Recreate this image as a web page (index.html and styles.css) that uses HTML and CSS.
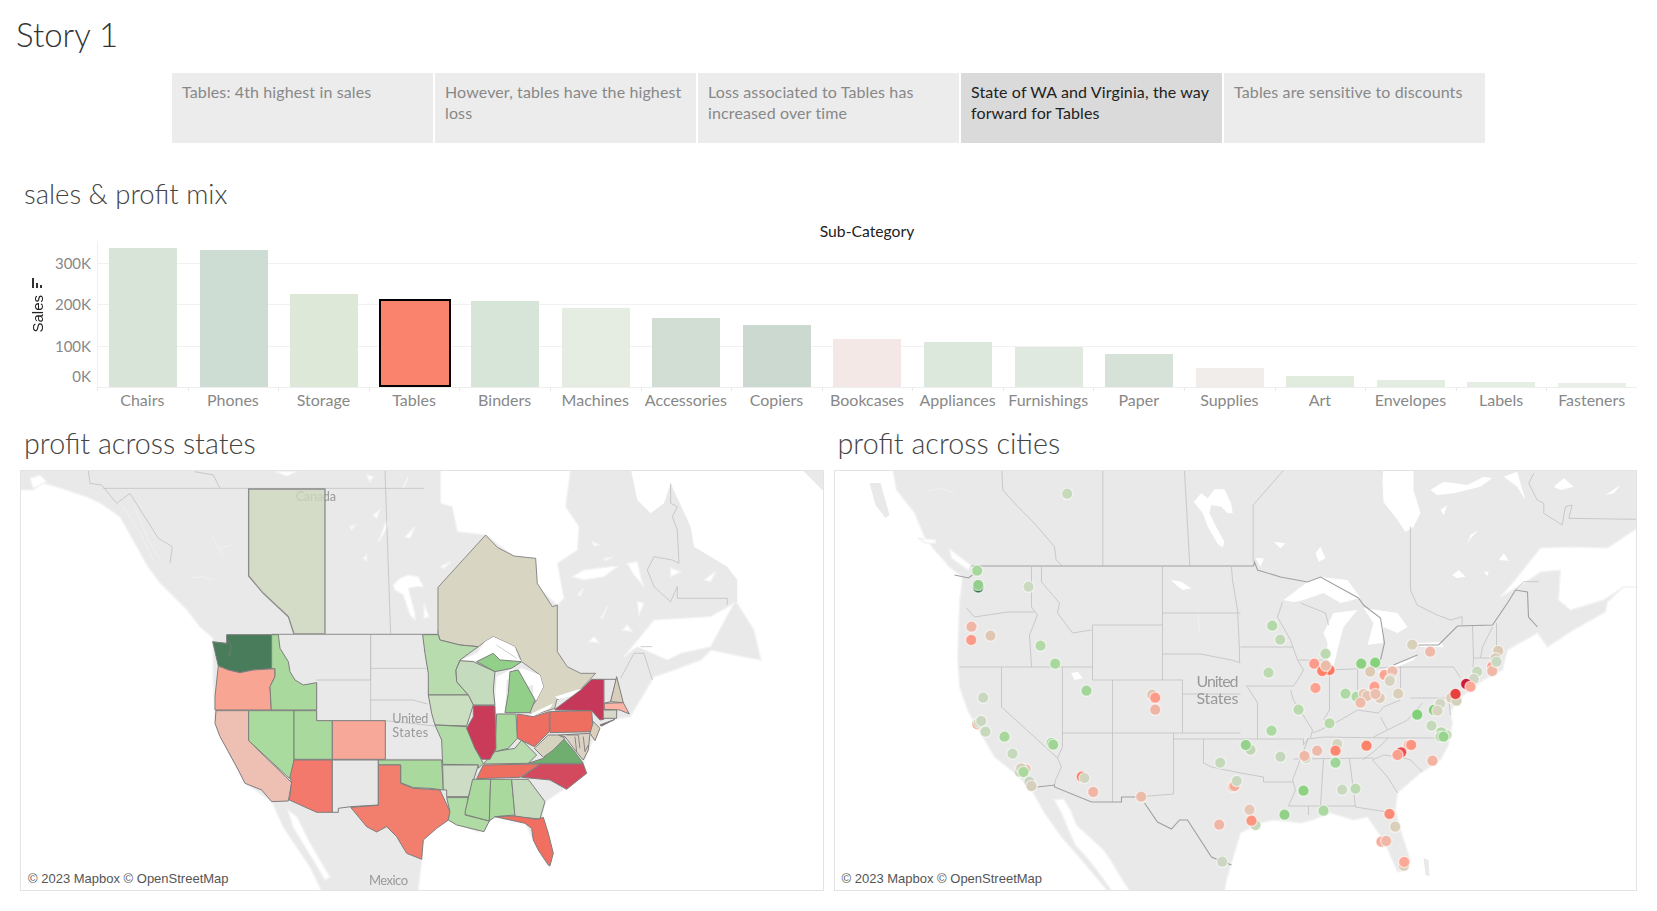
FILE: index.html
```html
<!DOCTYPE html>
<html lang="en">
<head>
<meta charset="utf-8">
<title>Story 1</title>
<link rel="stylesheet" href="styles.css">
</head>
<body>
<main class="story">
  <h1 class="story-title">Story 1</h1>
  <nav class="tabs">
    <div class="tab">Tables: 4th highest in sales</div>
    <div class="tab">However, tables have the highest loss</div>
    <div class="tab">Loss associated to Tables has increased over time</div>
    <div class="tab tab-active">State of WA and Virginia, the way forward for Tables</div>
    <div class="tab">Tables are sensitive to discounts</div>
  </nav>

  <section class="mix">
    <h2 class="sheet-title">sales &amp; profit mix</h2>
    <div class="col-header">Sub-Category</div>
    <div class="chart">
      <div class="yaxis">
        <div class="ytitle">
          <svg class="sort-icon" width="11" height="10" viewBox="0 0 11 10"><rect x="0" y="0" width="2" height="10"/><rect x="4" y="5" width="2" height="5"/><rect x="8" y="7" width="2" height="3"/></svg>
          <span class="ytitle-text">Sales</span>
        </div>
        <div class="yticks"><span>300K</span><span>200K</span><span>100K</span><span>0K</span></div>
      </div>
      <div class="plot">
        <div class="bar" style="height:139px;background:#d8e4d8"></div>
        <div class="bar" style="height:137px;background:#cdddd3"></div>
        <div class="bar" style="height:93px;background:#dde8d9"></div>
        <div class="bar bar-selected" style="height:88px;background:#f9836c"></div>
        <div class="bar" style="height:86px;background:#d7e4d8"></div>
        <div class="bar" style="height:79px;background:#e5ede3"></div>
        <div class="bar" style="height:69px;background:#d2ded4"></div>
        <div class="bar" style="height:62px;background:#ccd9d0"></div>
        <div class="bar" style="height:48px;background:#f3e8e6"></div>
        <div class="bar" style="height:45px;background:#dde8dc"></div>
        <div class="bar" style="height:40px;background:#e0e9df"></div>
        <div class="bar" style="height:33px;background:#d6e2d7"></div>
        <div class="bar" style="height:19px;background:#f0edea"></div>
        <div class="bar" style="height:11px;background:#e1ecdf"></div>
        <div class="bar" style="height:7px;background:#e4ede2"></div>
        <div class="bar" style="height:5px;background:#e4eee2"></div>
        <div class="bar" style="height:4px;background:#e9eee6"></div>
      </div>
      <div class="xlabels">
        <span>Chairs</span><span>Phones</span><span>Storage</span><span>Tables</span><span>Binders</span><span>Machines</span><span>Accessories</span><span>Copiers</span><span>Bookcases</span><span>Appliances</span><span>Furnishings</span><span>Paper</span><span>Supplies</span><span>Art</span><span>Envelopes</span><span>Labels</span><span>Fasteners</span>
      </div>
    </div>
  </section>

  <section class="maps">
    <div class="map-col">
      <h2 class="sheet-title">profit across states</h2>
      <div class="map-card">
        <svg class="map" viewBox="21 471 802 419">
          <rect class="land" x="0" y="400" width="900" height="500"/>
          <polygon class="water" points="18,490 33,490 43,483 57,487 87,497 100,503 120,517 133,540 148,567 160,583 187,610 200,627 213,638 213,680 215,720 228,752 245,783 272,802 283,827 310,867 322,892 18,892"/>
          <polygon class="water" points="288,810 297,817 310,843 330,877 325,880 307,850 293,827"/>
          <polygon class="water" points="418,892 422,859 423,840 437,828 450,820 478,832 489,821 495,817 525,823 533,840 542,857 549,866 553,853 542,817 545,802 563,790 587,773 583,763 593,740 600,727 615,719 630,717 654,677 674,670 701,660 711,650 744,657 761,660 754,630 737,603 826,595 826,892"/>
          <g transform="translate(20,470) scale(.3333)">
            <g class="water">
              <polygon points="765,5 830,5 800,18"/><polygon points="990,170 1005,165 995,180"/><polygon points="1075,215 1100,150 1105,165 1080,210"/><polygon points="1030,265 1040,255 1040,272"/><polygon points="1120,345 1140,325 1165,315 1195,320 1210,350 1190,350 1165,355 1185,430 1185,450 1170,435 1150,375 1125,360"/><polygon points="1040,15 1060,20 1050,35"/><polygon points="1150,50 1165,20 1150,55"/><polygon points="1155,200 1185,170 1170,205"/><polygon points="1060,135 1080,120 1070,145"/><polygon points="30,25 60,15 80,35 40,55"/>
            </g>
            <g class="river">
              <polyline points="575,195 610,260"/><polyline points="595,235 635,225"/><polyline points="510,325 545,320 578,330"/><polyline points="310,110 360,190 400,270"/><polyline points="340,100 385,210 420,270"/>
            </g>
            <g class="border-thin">
              <polyline points="205,0 210,40 245,45 290,100 330,70 415,205 457,230 450,280"/><polyline points="525,5 580,15 600,55"/><polyline points="250,55 1212,55"/><polyline points="1095,0 1112,492"/><polyline points="1052,492 1052,630"/>
            </g>
            <text class="map-label" x="827" y="92" textLength="121">Canada</text>
            <polygon class="state" fill="#ced8bf" fill-opacity=".8" points="686,57 915,57 915,492 822,492 805,440 730,370 686,318"/>
          </g>
          <g transform="translate(424,470) scale(.3333)">
            <polygon class="water-lake" points="620,-5 1130,-5 1195,60 1210,60 1210,410 940,400 940,330 910,290 810,230 800,170 740,40 720,100 680,130 640,90"/>
            <g class="water">
              <polygon points="50,-5 440,-5 425,110 465,170 460,240 400,280 420,385 400,405 340,350 335,265 270,260 185,195 100,185 85,110 50,100"/>
              <polygon points="600,560 690,450 860,440 930,400 860,530 770,550 730,570 640,530"/>
              <polygon points="445,320 480,300 560,290 580,290 540,320 480,330"/><polygon points="505,215 525,225 510,228"/><polygon points="540,265 565,262 545,272"/><polygon points="610,280 640,275 650,320 660,350 630,315"/><polygon points="740,295 770,305 740,320"/><polygon points="840,330 875,305 860,335"/><polygon points="530,445 550,410 535,445"/><polygon points="640,395 660,400 645,435"/><polygon points="495,515 510,500 525,518"/><polygon points="595,480 610,465 625,485"/><polygon points="462,375 478,355 470,378"/><polygon points="50,290 80,275 60,295"/><polygon points="0,400 15,440 0,445"/>
            </g>
            <g class="border-thin">
              <polyline points="740,40 740,100 760,110 745,140 760,180 765,280 745,270 690,260 670,300 690,350 740,395 760,350 760,385 910,385 910,405"/>
              <polyline points="590,625 630,550 660,550 685,630"/><polyline points="650,530 685,530"/>
            </g>
          </g>
          <text class="map-label" x="369" y="885" textLength="39">Mexico</text>
          <g transform="translate(200,620) scale(.3333)">
            <polygon class="state state-soft" fill="#d8d5c3" points="714,40 714,-98 857,-255 892,-218 942,-192 1007,-185 1012,-110 1057,-40 1072,-45 1072,95 1102,140 1142,160 1187,160 1145,205 1070,240 1065,265 1000,285 985,275 1010,240 1030,200 1020,165 965,125 955,100 945,80 880,50 855,65 835,80 780,75 720,60"/>
            <g class="water-lake">
              <polygon points="785,120 830,100 855,65 880,50 945,80 955,115 968,125 890,125 880,100 830,122"/>
              <polygon points="885,282 885,240 890,170 940,145 945,165 920,180 915,280"/>
              <polygon points="965,145 1020,165 1030,200 1010,240 1000,235 1000,195 975,200 950,150"/>
              <polygon points="985,285 1060,250 1050,265 1000,288"/>
              <polygon points="1065,230 1145,205 1130,225 1075,238"/>
            </g>
            <g class="border-thin">
              <polyline points="890,75 950,115"/>
              <polyline points="512,44 512,300"/><polyline points="350,180 512,180"/><polyline points="512,145 680,145"/><polyline points="512,240 640,240 682,252"/><polyline points="350,188 350,302 556,302 705,318"/><polyline points="556,302 556,418"/><polyline points="556,418 725,418"/>
            </g>
            <polyline class="border-us" points="215,43 715,43 715,30"/>
            <text class="map-label" x="577" y="308" textLength="108">United</text>
            <text class="map-label" x="577" y="352" textLength="108">States</text>
            <g class="states">
              <polygon fill="#497c5a" points="80,44 215,44 215,146 160,150 120,158 85,150 55,138 45,95 38,65 80,70"/>
              <polygon fill="#f9a593" points="55,138 85,150 120,158 160,150 225,146 225,170 210,200 214,270 45,270 45,230"/>
              <polygon fill="#a9d99d" points="215,44 235,44 240,85 265,125 270,155 285,180 310,195 350,188 350,270 214,270 210,200 225,170 225,146 215,146"/>
              <polygon fill="#eebfb3" points="48,272 146,272 146,362 275,488 265,543 215,545 185,510 135,490 115,450 85,395 60,350 45,310"/>
              <polygon fill="#aadb9e" points="146,272 282,272 282,450 268,475 146,362"/>
              <polygon fill="#a9d99d" points="282,272 350,272 350,302 397,302 397,418 282,418"/>
              <polygon fill="#f8a899" points="397,302 556,302 556,418 397,418"/>
              <polygon fill="#f2796b" points="282,420 397,420 397,577 350,577 268,540 275,488 270,470"/>
              <polygon fill="#e8e8e8" points="397,420 535,420 535,555 452,560 415,565 415,577 397,577"/>
              <polygon fill="#a9d99d" points="535,420 725,420 730,510 690,505 640,503 602,488 602,435 535,435"/>
              <polygon fill="#f27f6d" points="535,435 602,435 602,490 640,505 720,510 750,575 745,600 710,625 670,660 665,718 620,700 590,650 560,620 530,636 500,620 452,562 535,556"/>
              <polygon fill="#b9dcae" points="668,44 715,44 720,60 780,75 835,80 780,120 768,150 770,185 805,225 685,225 685,160 675,100"/>
              <polygon fill="#c5dbbd" points="780,122 820,125 885,155 880,210 885,255 820,255 805,225 770,185 768,150"/>
              <polygon fill="#cadec0" points="685,225 805,225 820,255 800,318 705,315 695,280"/>
              <polygon fill="#b0dba6" points="705,315 800,320 825,385 850,430 835,445 835,435 728,433 725,360"/>
              <polygon fill="#cddcc5" points="728,435 835,435 805,530 740,530 740,510 730,510"/>
              <polygon fill="#b0dba5" points="740,533 805,533 795,585 868,603 852,635 770,615 745,600 750,575"/>
              <polygon fill="#a9d99d" points="818,478 872,478 868,603 800,585 795,578"/>
              <polygon fill="#a9d99d" points="872,478 935,478 945,585 885,590 868,603"/>
              <polygon fill="#c7dcbe" points="935,478 985,478 1035,545 1020,597 945,590"/>
              <polygon fill="#f06f60" points="885,590 945,588 1012,598 1030,592 1045,640 1060,700 1050,738 1045,735 1015,690 1000,660 995,625 975,610 930,600"/>
              <polygon fill="#b9dcae" points="850,432 885,395 945,385 965,360 1010,405 985,430"/>
              <polygon fill="#ee6e60" points="850,435 1022,432 960,472 830,476"/>
              <polygon fill="#d34a5e" points="1022,432 1150,432 1160,460 1100,508 1050,480 965,472"/>
              <polygon fill="#dcd3c5" points="1075,345 1170,340 1165,390 1150,420 1125,390 1095,350"/>
              <polygon fill="#6fae6e" points="985,430 1030,415 1090,355 1120,390 1150,430"/>
              <polygon fill="#d6d2c0" points="1003,385 1045,345 1075,345 1095,355 1060,390 1030,412"/>
              <polygon fill="#ef6e62" points="952,282 1000,290 1048,275 1048,335 1003,380 952,355"/>
              <polygon fill="#a9d99d" points="890,282 948,282 952,355 925,385 885,395"/>
              <polygon fill="#c93b58" points="820,257 885,257 888,385 870,418 845,418 825,385 800,325 820,290"/>
              <polygon fill="#92cf89" points="930,155 955,150 1005,240 990,278 915,278 925,220"/>
              <polygon fill="#92cf89" points="830,125 880,100 900,120 965,125 935,145 885,155"/>
              <polygon fill="#ee6e60" points="1050,275 1175,272 1180,335 1050,338"/>
              <polygon fill="#c6385a" points="1065,268 1145,208 1175,178 1212,178 1212,298 1200,300 1175,272 1065,270"/>
              <polygon fill="#c6385a" points="1200,315 1245,298 1205,318"/>
              <polygon fill="#e8e8e8" points="1212,178 1250,178 1232,245 1212,250"/>
              <polygon fill="#d9cdbb" points="1232,245 1250,170 1270,248"/>
              <polygon fill="#fdb3a6" points="1213,250 1270,248 1288,282 1260,270 1213,268"/>
              <polygon fill="#d4d9c8" points="1210,270 1250,270 1250,295 1210,295"/>
              <polygon fill="#dccfbc" points="1180,305 1200,325 1185,362 1170,340"/>
            </g>
            <g class="state-detail">
              <polyline points="85,60 95,85 85,110 92,100"/>
              <polyline points="1100,345 1135,345 1140,385"/><polyline points="1150,350 1155,395 1165,375"/><polyline points="1125,350 1130,395"/>
            </g>
          </g>
        </svg>
        <div class="attribution">© 2023 Mapbox © OpenStreetMap</div>
      </div>
    </div>

    <div class="map-col">
      <h2 class="sheet-title">profit across cities</h2>
      <div class="map-card">
        <svg class="map" viewBox="834.5 471 801.5 419">
          <rect class="land" x="800" y="400" width="900" height="500"/>
          <polygon class="water" points="832,468 892,468 896,490 914,513 924,537 934,550 949,567 958,574 962,577 959,603 957,657 959,687 967,710 974,723 994,757 1014,773 1031,790 1044,813 1061,837 1081,860 1108,892 832,892"/>
          <polygon class="land" points="869,483 880,483 889,515 885,518 875,505"/>
          <polygon class="water" points="917,538 935,540 935,543 925,543"/><polygon class="water" points="949,549 970,565 968,570 951,558"/>
          <polygon class="water" points="1054,800 1063,799 1070,810 1076,825 1090,838 1103,850 1110,860 1122,880 1130,892 1112,892 1100,875 1090,862 1075,845 1068,830 1062,815"/>
          <polygon class="water" points="1224,892 1226,880 1231,863 1240,833 1260,823 1273,820 1300,823 1312,820 1330,813 1353,820 1367,817 1383,840 1397,872 1407,870 1410,860 1400,830 1395,810 1397,793 1420,773 1440,760 1448,745 1452,723 1450,712 1457,700 1483,680 1502,670 1507,650 1537,633 1547,647 1573,630 1605,612 1607,602 1623,587 1642,587 1642,892"/>
          <polygon class="land" points="1423,858 1428,860 1429,876 1425,875"/>
          <polygon class="water" points="1500,597 1517,577 1540,548 1573,547 1607,548 1637,528 1642,526 1642,587 1623,587 1603,600 1570,610 1558,600 1560,570 1540,572 1525,582"/>
          <polygon class="water-lake" points="1383,468 1413,468 1413,490 1420,513 1413,527 1405,532 1397,520 1383,502 1382,480"/>
          <g class="water-lake">
            <polygon points="1283,600 1307,582 1320,577 1347,580 1360,598 1340,603 1323,593 1303,600 1293,602"/>
            <polygon points="1323,633 1333,613 1357,610 1343,627 1337,650 1333,667 1326,660 1327,643"/>
            <polygon points="1363,608 1397,613 1407,627 1397,633 1383,627 1382,643 1367,645 1373,623"/>
            <polygon points="1377,672 1397,663 1417,655 1413,660 1397,667 1382,675"/>
            <polygon points="1417,643 1440,642 1443,647 1420,647"/>
          </g>
          <g transform="translate(834,470) scale(.3333)">
            <g class="water-lake">
              <polygon points="1078,95 1100,70 1120,85 1140,58 1170,58 1190,100 1195,130 1180,130 1160,110 1130,105 1125,130 1145,170 1170,215 1165,232 1150,222 1120,170 1105,130"/>
              <polygon points="1010,330 1040,335 1070,355 1045,360 1025,345"/>
              <polygon points="710,610 730,605 745,625 720,630"/>
            </g>
            <g class="river"><polyline points="275,65 320,55 360,70"/><polyline points="1090,420 1095,490"/></g>
            <g class="border-thin">
              <polyline points="502,0 505,60 550,110 600,160 660,230 665,270 683,288"/><polyline points="805,0 805,288"/><polyline points="1050,0 1066,288"/>
            </g>
          </g>
          <g transform="translate(1240,470) scale(.3333)">
            <g class="water-lake">
              <polygon points="570,60 610,35 680,45 730,20 755,25 720,50 640,70 590,75"/><polygon points="790,20 830,5 840,40 855,90 830,50"/><polygon points="940,50 970,25 1000,50 960,60"/><polygon points="1095,75 1140,45 1120,70"/><polygon points="600,120 620,105 610,135"/><polygon points="680,225 690,195 715,180 690,205"/><polygon points="225,250 240,230 255,265 235,275"/><polygon points="100,215 135,220 120,235"/><polygon points="45,265 70,265 60,290"/><polygon points="635,315 655,300 675,320 650,325"/><polygon points="730,305 745,305 740,318"/><polygon points="775,270 790,250 805,272"/>
            </g>
            <g class="border-thin">
              <polyline points="880,10 865,40 890,90 910,100 910,130 965,165 975,110 995,105 985,145 1190,148"/><polyline points="510,170 510,360 530,405 590,435 630,450 665,440 665,465"/><polyline points="130,0 38,105 38,275"/><polyline points="825,360 850,335 895,335"/>
            </g>
          </g>
          <g class="border-thin">
            <polyline points="966,608 974,617 1007,612 1034,612"/><polyline points="1031,567 1031,607 1037,615 1029,635 1031,667"/><polyline points="959,667 1092,667"/><polyline points="1041,567 1041,582 1059,603 1057,613 1072,633 1091,630"/><polyline points="1092,625 1162,625"/><polyline points="1092,625 1092,680 1162,680"/><polyline points="1001,667 1001,707 1057,758 1061,767 1055,780 1054,785"/><polyline points="1062,667 1062,747 1057,758"/><polyline points="1062,733 1240,733"/><polyline points="1112,680 1112,802"/><polyline points="1162,654 1162,680 1182,680 1182,733"/><polyline points="1182,694 1240,694"/><polyline points="1173,733 1173,794 1136,797"/><polyline points="1173,739 1203,739 1203,763 1211,767 1240,773 1263,777 1263,782"/><polyline points="1162,567 1162,654"/><polyline points="1162,613 1240,613"/><polyline points="1162,654 1200,654 1231,660 1240,663"/><polyline points="1231,567 1232,580 1237,610 1239,650 1239,662"/><polyline points="1240,647 1293,647"/><polyline points="1282,602 1277,617 1290,640 1297,660 1303,670 1297,680 1293,686"/><polyline points="1300,603 1325,613 1328,625"/><polyline points="1298,660 1327,660"/><polyline points="1329,670 1329,710 1323,720"/><polyline points="1329,670 1400,667"/><polyline points="1357,670 1357,690"/><polyline points="1400,667 1400,688"/><polyline points="1400,667 1453,667 1460,678"/><polyline points="1472,626 1473,658 1472,678"/><polyline points="1492,627 1482,647 1480,658"/><polyline points="1496,623 1496,647"/><polyline points="1473,658 1497,658"/><polyline points="1245,686 1293,686"/><polyline points="1290,690 1293,700 1312,730 1310,738"/><polyline points="1247,687 1257,703 1257,739"/><polyline points="1203,739 1303,739 1303,745 1308,738"/><polyline points="1263,782 1293,782"/><polyline points="1308,738 1297,767 1292,780 1295,790 1288,806"/><polyline points="1288,806 1308,806 1308,815"/><polyline points="1323,759 1320,806"/><polyline points="1349,759 1355,807 1387,812"/><polyline points="1308,806 1355,806"/><polyline points="1293,759 1373,758"/><polyline points="1308,739 1323,737 1388,738 1373,752 1362,760"/><polyline points="1388,738 1440,738"/><polyline points="1372,760 1383,755 1400,757 1410,760 1422,772"/><polyline points="1372,760 1387,777 1397,793"/><polyline points="1312,733 1320,730 1340,720 1357,710 1378,713 1383,707 1400,700"/><polyline points="1380,717 1387,730 1407,720 1422,703"/><polyline points="1373,737 1387,730"/><polyline points="1410,698 1448,698"/><polyline points="1448,698 1450,715"/>
          </g>
          <polyline class="border-us" points="971,566 1253,566 1254,562 1257,570 1280,577 1307,582 1320,577 1358,598 1363,605 1380,618 1384,643 1380,660"/>
          <polyline class="border-us" points="1393,665 1417,655"/>
          <polyline class="border-us" points="1418,645 1438,645 1457,626 1492,625 1507,603 1515,590 1527,592 1528,617 1537,627"/>
          <polyline class="border-us" points="954,575 968,578 972,575"/>
          <polyline class="border-us" points="1037,787 1054,785 1054,787 1091,802 1121,802 1121,797 1136,797"/>
          <polyline class="border-us" points="1144,803 1157,822 1171,829 1179,820 1187,820 1211,857 1218,860 1231,865"/>
          <text class="map-label map-label-lg" x="1196" y="687" textLength="42">United</text>
          <text class="map-label map-label-lg" x="1196" y="704" textLength="42">States</text>
          <g class="dots">
            <circle fill="#c5d9bb" cx="1066.7" cy="493.7" r="5"/><circle fill="#a8d79d" cx="976.7" cy="570.7" r="5"/><circle fill="#1f6138" cx="977.7" cy="587.3" r="5"/><circle fill="#93cf8a" cx="977.7" cy="585" r="5"/><circle fill="#cbd9c0" cx="1028" cy="586.7" r="5"/><circle fill="#efb6a6" cx="971" cy="626.7" r="5"/><circle fill="#fd9a88" cx="970.7" cy="640" r="5"/><circle fill="#dfc7b3" cx="990" cy="635.7" r="5"/><circle fill="#b4d9a8" cx="1040" cy="645.7" r="5"/><circle fill="#a8d89b" cx="1054.7" cy="663.7" r="5"/>
            <circle fill="#b3d8a7" cx="1271.7" cy="625.7" r="5"/><circle fill="#c0d9b5" cx="1279.7" cy="639.7" r="5"/><circle fill="#bcd9b1" cx="1268" cy="672.7" r="5"/><circle fill="#bcd9b1" cx="1325" cy="653.7" r="5"/><circle fill="#fb9c8b" cx="1313.7" cy="663.7" r="5"/><circle fill="#fb7762" cx="1329" cy="670" r="5"/><circle fill="#fe8068" cx="1321.7" cy="671" r="5"/><circle fill="#e9bba8" cx="1325.3" cy="665.7" r="5"/><circle fill="#8dd080" cx="1360.7" cy="663.7" r="5"/><circle fill="#86d17c" cx="1374.7" cy="662.7" r="5"/><circle fill="#dccbb4" cx="1369.7" cy="671.7" r="5"/><circle fill="#d8d0bb" cx="1411.7" cy="644.7" r="5"/><circle fill="#eeb9a8" cx="1429.7" cy="651.7" r="5"/><circle fill="#fba592" cx="1384" cy="675" r="5"/><circle fill="#ecbdac" cx="1392" cy="671.3" r="5"/><circle fill="#d7d2c0" cx="1390" cy="679.3" r="5"/><circle fill="#dcc9b6" cx="1497.7" cy="651" r="5"/><circle fill="#d6cbb8" cx="1495" cy="658.3" r="5"/><circle fill="#fba08f" cx="1491.7" cy="666.7" r="5"/><circle fill="#efb8a7" cx="1491.7" cy="671" r="5"/><circle fill="#c9d8c3" cx="1496" cy="661.7" r="5"/><circle fill="#c8d8bf" cx="1476.7" cy="671.7" r="5"/><circle fill="#d0d6c3" cx="1473.3" cy="679" r="5"/>
            <circle fill="#cc1b37" cx="1465.7" cy="684" r="5"/><circle fill="#fba897" cx="1470" cy="686.7" r="5"/><circle fill="#dcccb8" cx="1450.7" cy="697.7" r="5"/><circle fill="#d2d2bc" cx="1456" cy="700.7" r="5"/><circle fill="#e8403f" cx="1455" cy="694" r="5"/><circle fill="#fda392" cx="1315" cy="688" r="5"/><circle fill="#fca08f" cx="1374" cy="686.7" r="5"/><circle fill="#d7d2bf" cx="1389.3" cy="681" r="5"/><circle fill="#aed9a4" cx="1345" cy="693.7" r="5"/><circle fill="#b0d8a5" cx="1356" cy="696.7" r="5"/><circle fill="#e6c5b3" cx="1363.3" cy="694" r="5"/><circle fill="#e6c4b3" cx="1366.7" cy="696" r="5"/><circle fill="#ddc9b6" cx="1379.3" cy="698" r="5"/><circle fill="#ebbfad" cx="1375" cy="694" r="5"/><circle fill="#eebaa9" cx="1360" cy="702.7" r="5"/><circle fill="#dacfb9" cx="1397.7" cy="693.7" r="5"/><circle fill="#b9d9ae" cx="1298" cy="709.7" r="5"/><circle fill="#b5d9a9" cx="1329" cy="723.3" r="5"/><circle fill="#acd9a1" cx="1271" cy="730.7" r="5"/><circle fill="#bfd8b3" cx="1250" cy="749.7" r="5"/><circle fill="#96d28b" cx="1245.3" cy="745" r="5"/><circle fill="#c3d8ba" cx="1280" cy="756.7" r="5"/><circle fill="#c8d7bb" cx="1305.3" cy="758" r="5"/><circle fill="#efb8a6" cx="1304" cy="756" r="5"/><circle fill="#edb9a9" cx="1316.7" cy="750.7" r="5"/><circle fill="#d5d5c1" cx="1336.7" cy="744" r="5"/><circle fill="#fd8872" cx="1335" cy="750.7" r="5"/><circle fill="#9ed69a" cx="1335" cy="762.7" r="5"/><circle fill="#fb8368" cx="1366" cy="745.7" r="5"/><circle fill="#eebcaa" cx="1408.3" cy="745" r="5"/><circle fill="#fc9480" cx="1410.7" cy="745" r="5"/><circle fill="#ea4f4d" cx="1400.7" cy="752.3" r="5"/><circle fill="#fba08f" cx="1397" cy="755" r="5"/><circle fill="#f2b3a1" cx="1432" cy="760.7" r="5"/><circle fill="#80cf79" cx="1416.7" cy="714.7" r="5"/><circle fill="#85cf79" cx="1433.3" cy="710" r="5"/><circle fill="#d0d6c3" cx="1439.7" cy="703.7" r="5"/><circle fill="#d6d3bf" cx="1437" cy="710.7" r="5"/><circle fill="#c3d9ba" cx="1431" cy="725.7" r="5"/><circle fill="#c6d9bb" cx="1446" cy="735" r="5"/><circle fill="#b3d8a9" cx="1440.7" cy="732.3" r="5"/><circle fill="#bcd9b0" cx="1440" cy="736.7" r="5"/><circle fill="#99d48f" cx="1443" cy="736.7" r="5"/><circle fill="#8dd181" cx="1303" cy="790.7" r="5"/><circle fill="#c8d9bd" cx="1341.7" cy="789.7" r="5"/><circle fill="#bcd9b1" cx="1355" cy="788.7" r="5"/><circle fill="#aed8a3" cx="1323" cy="810.7" r="5"/><circle fill="#92d187" cx="1284" cy="814.7" r="5"/><circle fill="#e4c7b4" cx="1249" cy="809.7" r="5"/><circle fill="#c5d8bb" cx="1255" cy="825" r="5"/><circle fill="#fc9580" cx="1251" cy="820.7" r="5"/><circle fill="#fb8b74" cx="1389" cy="814" r="5"/><circle fill="#dacfba" cx="1394.7" cy="826.7" r="5"/><circle fill="#f8ad9c" cx="1381" cy="841.7" r="5"/><circle fill="#efb7a6" cx="1385.7" cy="841" r="5"/><circle fill="#dccdb8" cx="1403.3" cy="865.7" r="5"/><circle fill="#fda797" cx="1403.7" cy="862" r="5"/>
            <circle fill="#c8d8bf" cx="982.7" cy="697.7" r="5"/><circle fill="#fb866f" cx="977" cy="724" r="5"/><circle fill="#ccd7c1" cx="978.3" cy="722.7" r="5"/><circle fill="#c9d7bf" cx="980.7" cy="721" r="5"/><circle fill="#c7d8bd" cx="985" cy="731.7" r="5"/><circle fill="#a7d79b" cx="1004" cy="736.7" r="5"/><circle fill="#c7d9bd" cx="1012" cy="753.7" r="5"/><circle fill="#a8d79c" cx="1051" cy="743" r="5"/><circle fill="#a0d595" cx="1052.7" cy="744.7" r="5"/><circle fill="#a4d699" cx="1086" cy="690.7" r="5"/><circle fill="#dcc8b4" cx="1151.7" cy="694.7" r="5"/><circle fill="#fd9b8a" cx="1154.7" cy="697.7" r="5"/><circle fill="#efb5a4" cx="1154.7" cy="709.7" r="5"/><circle fill="#e8bfad" cx="1025" cy="769.3" r="5"/><circle fill="#cad3bd" cx="1019.3" cy="771.7" r="5"/><circle fill="#d7d0ba" cx="1020.7" cy="768.3" r="5"/><circle fill="#aad89f" cx="1023" cy="772" r="5"/><circle fill="#ccd5c2" cx="1029" cy="781.7" r="5"/><circle fill="#d5cfbc" cx="1031" cy="786" r="5"/><circle fill="#f97b63" cx="1081.3" cy="776.7" r="5"/><circle fill="#d2d5c2" cx="1084" cy="778" r="5"/><circle fill="#f0b5a3" cx="1092.7" cy="792" r="5"/><circle fill="#ebbca9" cx="1140.7" cy="796.7" r="5"/><circle fill="#f0b6a5" cx="1218.7" cy="824.7" r="5"/><circle fill="#cdd6c2" cx="1221.7" cy="861.7" r="5"/><circle fill="#c4d8ba" cx="1219.7" cy="762.7" r="5"/><circle fill="#dbc9b6" cx="1232.3" cy="786.7" r="5"/><circle fill="#f5aa99" cx="1234" cy="786" r="5"/><circle fill="#cad7bf" cx="1236.3" cy="781" r="5"/>
          </g>
        </svg>
        <div class="attribution">© 2023 Mapbox © OpenStreetMap</div>
      </div>
    </div>
  </section>
</main>
</body>
</html>
```

FILE: styles.css
```css
* { box-sizing: border-box; }
html, body { margin: 0; padding: 0; background: #fff; }
body { font-family: Lato, "Open Sans", sans-serif; color: #333; overflow: hidden; }
.story { width: 1657px; height: 911px; padding: 0 20px 0 0; }

.story-title {
  margin: 0;
  padding: 15px 0 0 16px;
  height: 73px;
  font-size: 33px;
  line-height: 38px;
  font-weight: 300;
  color: #333;
}

.tabs { display: flex; gap: 2px; margin-left: 172px; width: 1313px; height: 70px; }
.tab {
  flex: 1 1 0;
  background: #ececec;
  color: #888;
  padding: 8px 10px;
  font-size: 16px;
  letter-spacing: .12px;
  line-height: 21px;
}
.tab-active { background: #dadada; color: #222; }

.mix { padding-top: 36px; }
.sheet-title {
  margin: 0;
  padding-left: 24px;
  font-size: 27.5px;
  line-height: 30px;
  font-weight: 300;
  color: #444;
}
.col-header {
  height: 19px;
  margin-top: 13px;
  padding-left: 97px;
  text-align: center;
  font-size: 15.7px;
  line-height: 18px;
  color: #222;
}

.chart {
  display: grid;
  grid-template-columns: 97px 1fr;
  grid-template-rows: 147px 24px;
}
.yaxis { display: grid; grid-template-columns: 1fr auto; padding-left: 32px; }
.ytitle { display: flex; flex-direction: column; gap: 7px; padding-top: 37px; }
.sort-icon { display: block; fill: #333; }
.ytitle-text {
  writing-mode: vertical-rl;
  transform: rotate(180deg);
  font-family: "Liberation Sans", Arial, sans-serif;
  font-size: 15px;
  line-height: 12px;
  color: #222;
  width: 12px;
}
.yticks {
  display: grid;
  grid-template-rows: 30px 41px 42px 30px;
  padding-right: 6px;
  font-size: 15px;
  line-height: 16px;
  color: #888;
  text-align: right;
  align-items: end;
}

.plot {
  display: grid;
  grid-template-columns: repeat(17, 1fr);
  align-items: end;
  justify-items: center;
  border-left: 1px solid #f0f0f0;
  border-bottom: 1px solid #eeeeee;
  background:
    linear-gradient(#f1f1f1, #f1f1f1) 0 22px / 100% 1px no-repeat,
    linear-gradient(#f1f1f1, #f1f1f1) 0 63px / 100% 1px no-repeat,
    linear-gradient(#f1f1f1, #f1f1f1) 0 105px / 100% 1px no-repeat;
}
.bar { width: 68px; }
.bar-selected { width: 72px; border: 2.5px solid #000; }

.xlabels {
  grid-column: 2;
  display: grid;
  grid-template-columns: repeat(17, 1fr);
  text-align: center;
  font-size: 16px;
  line-height: 24px;
  color: #888;
  white-space: nowrap;
}
.xlabels span {
  background: linear-gradient(#e8e8e8, #e8e8e8) 0 0 / 1px 3px no-repeat;
}

.maps { display: grid; grid-template-columns: 804px 803.5px; column-gap: 9.5px; margin: 16px 0 0 20px; }
.map-col .sheet-title { padding-left: 4px; height: 42px; font-size: 28.7px; }
.map-card { position: relative; height: 421px; border: 1px solid #e3e3e3; overflow: hidden; background: #fff; }
.map { display: block; width: 100%; height: 100%; filter: blur(.4px); }

.land { fill: #e9e9e9; }
.water { fill: #fff; stroke: #f3f3f3; stroke-width: 1.5; }
g.water { stroke-width: 4; }
.water-lake { fill: #fff; stroke: none; }
.river { fill: none; stroke: #fff; stroke-opacity: .5; stroke-width: 2; }
.border-thin { fill: none; stroke: #c0c0c0; stroke-width: .8; }
g g.border-thin { stroke-width: 2.4; }
.border-us { fill: none; stroke: #a0a0a0; stroke-width: 1.1; }
g .border-us { stroke-width: 3.4; }
.map-label { font-family: Lato, sans-serif; font-size: 13px; fill: #999; }
g .map-label { font-size: 38px; }
.map-label-lg { font-size: 16px; }
.state { stroke: #8c8c8c; stroke-width: 4; }
.state-soft { stroke: #7a7a7a; stroke-width: 2.5; }
.states polygon { stroke: #7d7d7d; stroke-width: 3; stroke-linejoin: round; }
.state-detail { fill: none; stroke: #777; stroke-width: 2.5; }
.dots circle { r: 5.6px; stroke: #fff; stroke-opacity: .55; stroke-width: 1.4; }

.attribution {
  position: absolute;
  left: 3px;
  bottom: 3px;
  padding: 0 4px;
  height: 17px;
  background: rgba(255, 255, 255, .75);
  font-family: "Liberation Sans", Arial, sans-serif;
  font-size: 13px;
  line-height: 17px;
  color: #555;
  white-space: nowrap;
}
```
